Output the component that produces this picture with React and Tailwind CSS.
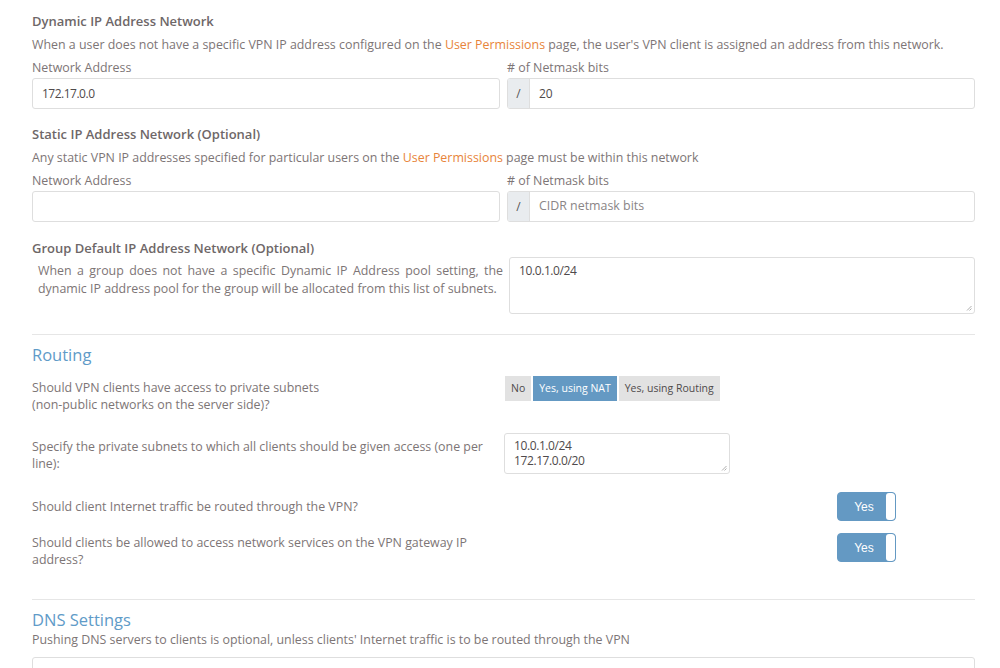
import React from 'react';

const font = { fontFamily: '"Open Sans", "Liberation Sans", sans-serif' };

const Heading = ({ children, className = '' }) => (
  <h3 className={`text-[13px] font-semibold leading-[18px] text-[#6e6768] ${className}`}>{children}</h3>
);

const Desc = ({ children, className = '' }) => (
  <p className={`text-[12.4px] leading-[18px] text-[#7d7576] whitespace-nowrap ${className}`}>{children}</p>
);

const Label = ({ children, className = '' }) => (
  <div className={`text-[12.4px] leading-[18px] text-[#7d7576] ${className}`}>{children}</div>
);

const Link = ({ children }) => <span className="text-[#e8843a]">{children}</span>;

const TextInput = ({ value, placeholder }) => (
  <div className="h-[31px] rounded-[3px] border border-[#dedede] bg-white px-[9px] flex items-center text-[12px] text-[#4f4a4b]">
    {value ? <span className="tracking-[-0.5px]">{value}</span> : <span className="text-[#8a8586]">{placeholder}</span>}
  </div>
);

const NetmaskInput = ({ value, placeholder }) => (
  <div className="h-[31px] rounded-[3px] border border-[#dedede] bg-white flex items-stretch overflow-hidden">
    <div className="w-[22px] bg-[#e9ecef] border-r border-[#dedede] flex items-center justify-center text-[12px] text-[#555]">
      /
    </div>
    <div className="flex-1 flex items-center px-[9px] text-[12px] text-[#4f4a4b]">
      {value ? value : <span className="text-[12.4px] text-[#8a8586]">{placeholder}</span>}
    </div>
  </div>
);

const TextArea = ({ lines, className = '' }) => (
  <div className={`relative rounded-[3px] border border-[#dedede] bg-white px-[9px] text-[12px] leading-[15px] tracking-[-0.4px] text-[#4f4a4b] ${className}`}>
    {lines.map((l) => (
      <div key={l}>{l}</div>
    ))}
    <svg className="absolute right-[2px] bottom-[2px]" width="6" height="6" viewBox="0 0 6 6">
      <path d="M5.5 1 L1 5.5 M5.5 3.5 L3.5 5.5" stroke="#999" strokeWidth="0.8" />
    </svg>
  </div>
);

const Toggle = () => (
  <div className="w-[59px] h-[29px] rounded-[4px] bg-[#6499c3] border border-[#6499c3] flex items-stretch overflow-hidden">
    <div className="flex-1 flex items-center justify-center text-white text-[12px] pl-[4px]" style={{ fontFamily: '"Liberation Sans", Arial, sans-serif' }}>
      Yes
    </div>
    <div className="w-[9px] bg-white rounded-[3px]" />
  </div>
);

export default function App() {
  return (
    <div className="h-[668px] bg-white pl-8 pr-[25px] pt-[12px] overflow-hidden" style={font}>
      {/* Dynamic */}
      <Heading>Dynamic IP Address Network</Heading>
      <Desc className="mt-[6px]">
        When a user does not have a specific VPN IP address configured on the <Link>User Permissions</Link> page, the user's VPN client is assigned an address from this network.
      </Desc>
      <div className="grid grid-cols-2 gap-x-[7px] mt-[5px]">
        <div>
          <Label className="mb-[1px]">Network Address</Label>
          <TextInput value="172.17.0.0" />
        </div>
        <div>
          <Label className="mb-[1px]"># of Netmask bits</Label>
          <NetmaskInput value="20" />
        </div>
      </div>

      {/* Static */}
      <Heading className="mt-[16px]">Static IP Address Network (Optional)</Heading>
      <Desc className="mt-[6px]">
        Any static VPN IP addresses specified for particular users on the <Link>User Permissions</Link> page must be within this network
      </Desc>
      <div className="grid grid-cols-2 gap-x-[7px] mt-[5px]">
        <div>
          <Label className="mb-[1px]">Network Address</Label>
          <TextInput value="" placeholder="" />
        </div>
        <div>
          <Label className="mb-[1px]"># of Netmask bits</Label>
          <NetmaskInput value="" placeholder="CIDR netmask bits" />
        </div>
      </div>

      {/* Group default */}
      <Heading className="mt-[17px]">Group Default IP Address Network (Optional)</Heading>
      <div className="flex">
        <div className="w-[465px] ml-[6px] pt-[5px] text-[12.4px] leading-[18px] text-[#7d7576]">
          <div className="text-justify [text-align-last:justify]">
            When a group does not have a specific Dynamic IP Address pool setting, the
          </div>
          <div className="whitespace-nowrap">dynamic IP address pool for the group will be allocated from this list of subnets.</div>
        </div>
        <TextArea lines={['10.0.1.0/24']} className="ml-[6px] flex-1 h-[57px] pt-[5px]" />
      </div>

      <div className="mt-[20px] border-t border-[#e6e6e6]" />

      {/* Routing */}
      <h2 className="mt-[8px] text-[16.5px] leading-[24px] text-[#5f9bc8]">Routing</h2>

      <div className="grid grid-cols-[472px_1fr] mt-[9px]">
        <div className="pt-[3px] text-[12.4px] leading-[17px] text-[#7d7576] whitespace-nowrap">
          Should VPN clients have access to private subnets
          <br />
          (non-public networks on the server side)?
        </div>
        <div className="flex items-start gap-[2px] pl-[1px]">
          <div className="h-[25px] px-[6px] flex items-center bg-[#e2e2e2] text-[10.5px] text-[#4f4a4b]">No</div>
          <div className="h-[25px] px-[6px] flex items-center bg-[#6499c3] text-[10.5px] text-white">Yes, using NAT</div>
          <div className="h-[25px] px-[6px] flex items-center bg-[#e2e2e2] text-[10.5px] text-[#4f4a4b]">Yes, using Routing</div>
        </div>
      </div>

      <div className="grid grid-cols-[472px_1fr] mt-[20px]">
        <div className="pt-[5px] text-[12.4px] leading-[17px] text-[#7d7576] whitespace-nowrap">
          Specify the private subnets to which all clients should be given access (one per
          <br />
          line):
        </div>
        <div>
          <TextArea lines={['10.0.1.0/24', '172.17.0.0/20']} className="w-[226px] h-[41px] pt-[4px]" />
        </div>
      </div>

      <div className="grid grid-cols-[472px_1fr] mt-[18px] items-center">
        <div className="text-[12.4px] leading-[17px] text-[#7d7576] whitespace-nowrap">
          Should client Internet traffic be routed through the VPN?
        </div>
        <div className="pl-[333px]">
          <Toggle />
        </div>
      </div>

      <div className="grid grid-cols-[472px_1fr] mt-[12px]">
        <div className="pt-[1px] text-[12.4px] leading-[17px] text-[#7d7576] whitespace-nowrap">
          Should clients be allowed to access network services on the VPN gateway IP
          <br />
          address?
        </div>
        <div className="pl-[333px]">
          <Toggle />
        </div>
      </div>

      <div className="mt-[31px] border-t border-[#e6e6e6]" />

      {/* DNS */}
      <h2 className="mt-[8px] text-[16.5px] leading-[24px] text-[#5f9bc8]">DNS Settings</h2>
      <Desc className="mt-[-1px]">
        Pushing DNS servers to clients is optional, unless clients' Internet traffic is to be routed through the VPN
      </Desc>
      <div className="mt-[8px] h-[31px] rounded-[3px] border border-[#dedede] bg-white" />
    </div>
  );
}
